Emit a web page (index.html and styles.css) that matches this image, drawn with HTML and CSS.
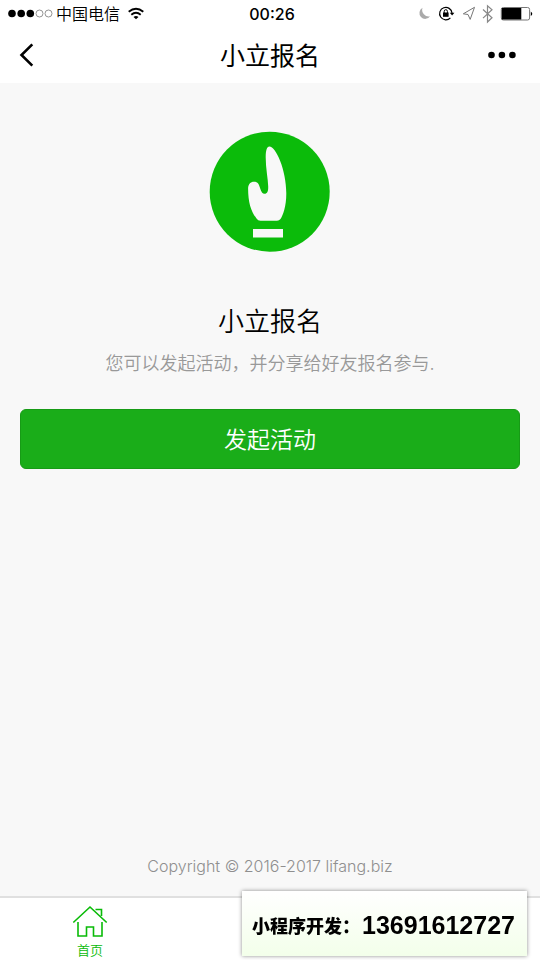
FILE: index.html
```
<!DOCTYPE html>
<html lang="zh-CN">
<head>
<meta charset="utf-8">
<meta name="viewport" content="width=device-width, initial-scale=1">
<title>小立报名</title>
<link rel="stylesheet" href="styles.css">
</head>
<body>
<header class="top">
  <div class="status">
    <div class="status-left">
      <svg width="45" height="10" viewBox="0 0 45 10" aria-hidden="true">
        <circle cx="4" cy="4.500" r="3.800"/><circle cx="13.200" cy="4.500" r="3.800"/><circle cx="22.300" cy="4.500" r="3.800"/>
        <circle cx="31.500" cy="4.500" r="3.500" fill="none" stroke="#777" stroke-width=".8"/><circle cx="40.500" cy="4.500" r="3.500" fill="none" stroke="#777" stroke-width=".8"/>
      </svg>
      <span class="carrier">中国电信</span>
      <svg class="wifi" width="16" height="12" viewBox="0 0 16 12" fill="none" stroke="#000" stroke-width="1.800" aria-hidden="true">
        <path d="M.7 3.800Q8-2.300 15.300 3.800M3.300 6.800Q8 2.800 12.700 6.800"/>
        <path d="M8 11.300 5.500 8.900Q8 6.900 10.500 8.900Z" fill="#000" stroke="none"/>
      </svg>
    </div>
    <time class="clock">00:26</time>
    <div class="status-right">
      <svg width="116" height="18" viewBox="0 0 116 18" fill="none" aria-hidden="true">
        <path d="M6.500 2.800A5.900 5.900 0 1 0 14.200 11.300 6.600 6.600 0 0 1 6.500 2.800Z" fill="#aaa"/>
        <path d="M34.400 12.800A6.200 6.200 0 1 1 36 8" stroke="#000" stroke-width="1.200"/>
        <path d="M33.800 7.700h4.600l-2.300 2.800Z" fill="#000"/>
        <path d="M27 7.500h5.600v4.300H27Z" fill="#000"/>
        <path d="M28.200 8V6.300a1.600 1.600 0 0 1 3.200 0V8" stroke="#000"/>
        <path d="M58.500 2.300 47.300 8.800l4.700.7 2.200 4.900Z" stroke="#777"/>
        <path d="m67 4.500 9 8.300-4.500 4.200V.8L76 4.800l-9 8.300" stroke="#888" stroke-width="1.200"/>
        <rect x="85.300" y="2.500" width="28.300" height="12.500" rx="2" stroke="#777"/>
        <path d="M85.800 3h19.500v11.500H85.800Z" fill="#000"/>
        <path d="M114.800 6.500v4.600q3-2.300 0-4.600Z" fill="#000"/>
      </svg>
    </div>
  </div>
  <nav class="navbar">
    <button class="nav-btn" type="button" aria-label="返回">
      <svg width="16" height="26" viewBox="0 0 16 26" fill="none" stroke="#000" stroke-width="2.600"><path d="M12.300 2.300 1.500 13l10.800 10.700"/></svg>
    </button>
    <h1 class="nav-title">小立报名</h1>
    <button class="nav-btn nav-more" type="button" aria-label="更多">
      <svg width="28" height="8" viewBox="0 0 28 8"><circle cx="3.500" cy="4" r="3.300"/><circle cx="13.900" cy="4" r="3.300"/><circle cx="24.400" cy="4" r="3.300"/></svg>
    </button>
  </nav>
</header>
<main class="page">
  <svg class="logo" width="120" height="120" viewBox="0 0 120 120" aria-hidden="true">
    <circle cx="59.700" cy="59.700" r="60" fill="#0bbb0a"/>
    <path d="M59.300 14.500C66 14.500 76.300 38 76.300 61.500C76.300 74.500 73 83.500 70.500 87Q69.200 88.700 67 88.700H50.500Q48 88.700 46.500 86.500C41 79.500 38.100 70.500 38.100 56.500C38.100 52.500 40.500 49.800 44 49.800C48 49.800 49 52.500 50.200 56.500C51.300 60 52.500 61.700 54.500 61.700C57.500 61.700 58.300 59 58.200 54.500C58 46.500 55.700 36.500 55.700 25.500C55.700 18 57 14.500 59.300 14.500Z" fill="#f8f8f8"/>
    <path d="M43 97H73V105.500H43Z" fill="#f8f8f8"/>
  </svg>
  <h2 class="heading">小立报名</h2>
  <p class="desc">您可以发起活动，并分享给好友报名参与.</p>
  <button class="primary" type="button">发起活动</button>
  <p class="copyright">Copyright © 2016-2017 lifang.biz</p>
</main>
<footer class="tabbar">
  <a class="tab" href="#">
    <svg width="36" height="34" viewBox="0 0 36 34" fill="none" aria-hidden="true"><path class="house" d="M1.300 18.500 18 3 34.700 18.500M23.500 5.500h6V12M6 18v14h8.500v-9h7v9H30V18"/></svg>
    <span>首页</span>
  </a>
</footer>
<aside class="promo"><span class="promo-label">小程序开发：</span><span class="promo-phone">13691612727</span></aside>
</body>
</html>
```
FILE: styles.css
```
* {
  box-sizing: border-box;
}

body {
  margin: 0;
  min-height: 100vh;
  display: flex;
  flex-direction: column;
  background: #f8f8f8;
  color: #000;
  font-family: Inter, "Noto Sans CJK SC", sans-serif;
}

h1,
h2,
p {
  margin: 0;
  font-weight: 400;
}

svg {
  display: block;
  flex: none;
  overflow: visible;
}

button {
  font: inherit;
  cursor: pointer;
}

.top {
  background: #fff;
}

.status {
  display: grid;
  grid-template-columns: 1fr auto 1fr;
  align-items: center;
  height: 27px;
  padding: 0 8px;
}

.status-left {
  display: flex;
  align-items: center;
  gap: 3px;
}

.carrier {
  font-size: 16px;
  font-weight: 350;
  line-height: 24px;
}

.wifi {
  margin-left: 5px;
}

.clock {
  padding-left: 4px;
  font-size: 16px;
  font-weight: 500;
  line-height: 24px;
}

.status-right {
  display: flex;
  justify-content: flex-end;
}

.navbar {
  display: grid;
  grid-template-columns: 1fr auto 1fr;
  align-items: center;
  height: 56px;
  padding: 0 20px;
}

.nav-btn {
  display: flex;
  justify-self: start;
  padding: 0;
  border: 0;
  background: none;
}

.nav-more {
  justify-self: end;
  margin-right: 4px;
}

.nav-title {
  padding-top: 2px;
  font-size: 25px;
  font-weight: 400;
  line-height: 36px;
}

.page {
  flex: 1;
  display: flex;
  flex-direction: column;
  align-items: center;
  padding: 49px 20px 20px;
}

.heading {
  margin-top: 50px;
  font-size: 26px;
  font-weight: 350;
  line-height: 40px;
}

.desc {
  margin-top: 8px;
  color: #999;
  font-size: 18px;
  font-weight: 350;
  line-height: 28px;
}

.primary {
  width: 100%;
  height: 60px;
  margin-top: 31px;
  padding: 0 0 2px;
  border: 1px solid #179b16;
  border-radius: 6px;
  background: #1aad19;
  color: #fff;
  font-size: 23px;
  font-weight: 350;
}

.copyright {
  margin-top: auto;
  color: #8f8f8f;
  font-size: 16px;
  font-weight: 300;
  line-height: 20px;
}

.tabbar {
  display: grid;
  grid-template-columns: repeat(3, 1fr);
  height: 64px;
  border-top: 2px solid #e0e0e0;
  background: #fff;
}

.tab {
  display: flex;
  flex-direction: column;
  align-items: center;
  gap: 2px;
  padding-top: 6px;
  color: #09bb07;
  font-size: 13px;
  font-weight: 350;
  line-height: 20px;
  text-decoration: none;
}

.house {
  stroke: #09bb07;
  stroke-width: 1.6px;
}

.promo {
  position: fixed;
  right: 13px;
  bottom: 4px;
  display: flex;
  align-items: center;
  height: 65px;
  padding: 2px 12px 0 10px;
  background: linear-gradient(#fff, #f3ffea);
  box-shadow: 0 0 4px rgba(0, 0, 0, 0.45);
  font-weight: 900;
  white-space: nowrap;
}

.promo-label {
  margin-right: 2px;
  font-size: 18px;
}

.promo-phone {
  padding-top: 2px;
  font-family: "Liberation Sans", sans-serif;
  font-size: 25px;
}
```
